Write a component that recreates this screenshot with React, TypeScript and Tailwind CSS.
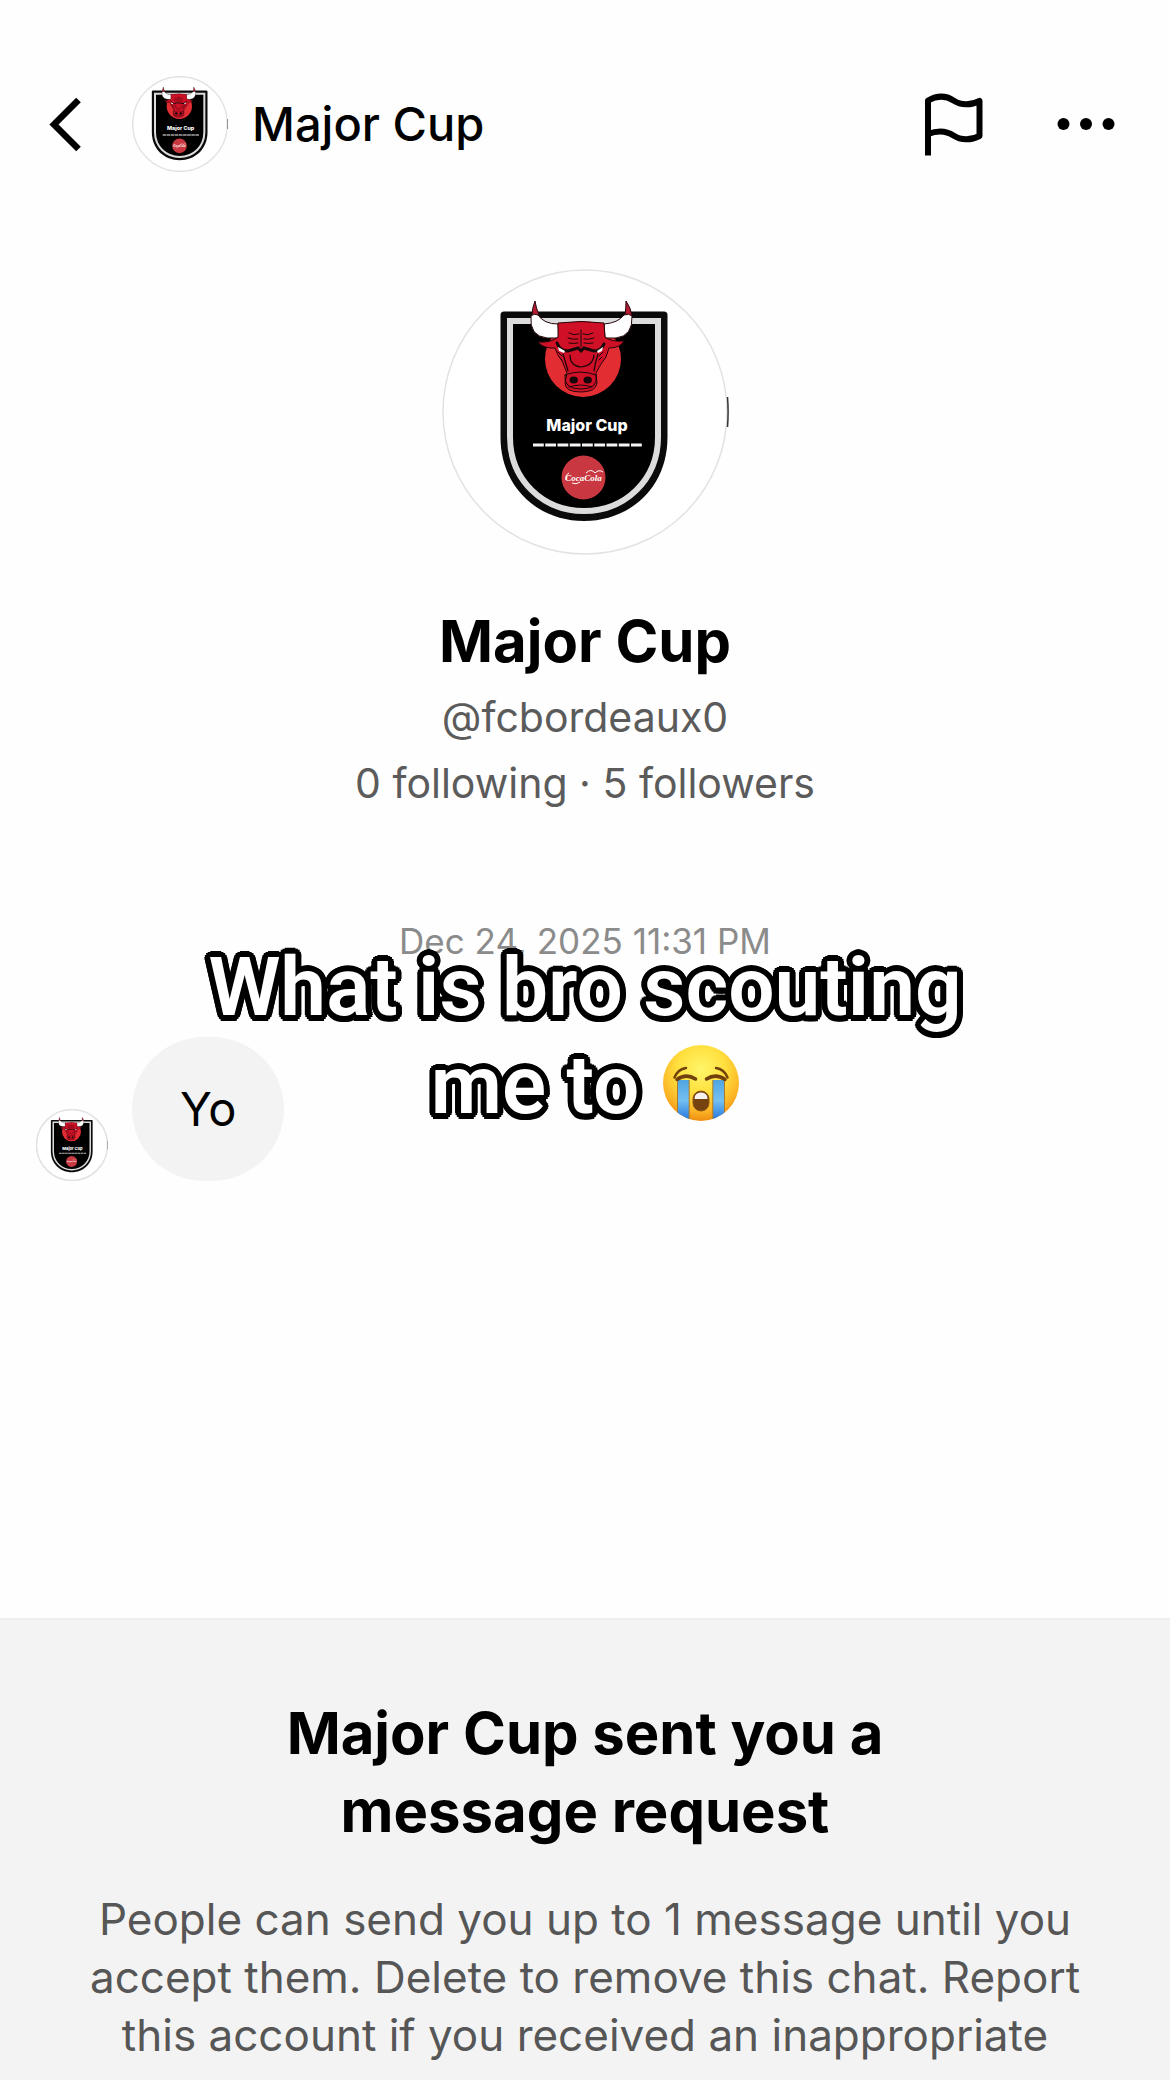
import type { ReactNode } from "react";

type Message = { id: number; text: string };

const profile = {
  name: "Major Cup",
  handle: "@fcbordeaux0",
  following: 0,
  followers: 5,
};

const messages: Message[] = [{ id: 1, text: "Yo" }];

export default function App() {
  return (
    <main className="flex min-h-screen flex-col overflow-hidden bg-[#fefefe] font-['Inter',sans-serif] text-black">
      {/* Header */}
      <header className="flex items-center pt-[76px] pr-[54px] pl-[48px]">
        <IconButton label="Back">
          <BackIcon />
        </IconButton>
        <div className="ml-[50px] size-24 shrink-0">
          <Crest />
        </div>
        <h1 className="ml-6 flex-1 text-[47px] leading-[58px] font-medium">
          {profile.name}
        </h1>
        <IconButton label="Report">
          <FlagIcon />
        </IconButton>
        <div className="w-[72px]" />
        <IconButton label="More options">
          <DotsIcon />
        </IconButton>
      </header>

      {/* Profile */}
      <section className="flex flex-col items-center pt-24 text-center">
        <div className="size-72">
          <Crest />
        </div>
        <h2 className="mt-[46px] text-[58px] leading-[78px] font-bold">
          {profile.name}
        </h2>
        <p className="mt-1 text-[41px] leading-[66px] text-[#5b5b5b]">
          {profile.handle}
        </p>
        <p className="text-[41px] leading-[66px] text-[#5b5b5b]">
          {profile.following} following · {profile.followers} followers
        </p>
      </section>

      {/* Chat */}
      <section className="relative flex-1 pt-[101px]">
        <time
          dateTime="2025-12-24T23:31"
          className="block text-center text-[35px] leading-[48px] text-[#8b8b8b]"
        >
          Dec 24, 2025 11:31 PM
        </time>
        <ul className="mt-[72px] px-9">
          {messages.map((m) => (
            <li key={m.id} className="flex items-end gap-6">
              <div className="size-[72px] shrink-0">
                <Crest />
              </div>
              <p className="rounded-[72px] bg-[#f3f3f3] px-12 py-[43px] text-[47px] leading-[58px]">
                {m.text}
              </p>
            </li>
          ))}
        </ul>
        <Caption />
      </section>

      {/* Message request */}
      <section className="border-t-2 border-[#efefef] bg-[#f3f3f3] px-[60px] pt-[74px] text-center">
        <h2 className="mx-auto max-w-[720px] text-[58px] leading-[78px] font-bold">
          {profile.name} sent you a message request
        </h2>
        <p className="mt-10 text-[44px] leading-[58px] text-[#565656]">
          People can send you up to 1 message until you
          <br />
          accept them. Delete to remove this chat. Report
          <br />
          this account if you received an inappropriate
        </p>
        <div className="h-4" />
      </section>
    </main>
  );
}

function IconButton({
  label,
  children,
}: {
  label: string;
  children: ReactNode;
}) {
  return (
    <button type="button" aria-label={label} className="shrink-0">
      {children}
    </button>
  );
}

function BackIcon() {
  return (
    <svg className="h-14 w-[34px]" viewBox="0 0 34 56" fill="none">
      <path d="M30.500 4 6 28.500 30.500 53" stroke="#000" strokeWidth="6.500" />
    </svg>
  );
}

function FlagIcon() {
  return (
    <svg className="h-16 w-[60px]" viewBox="0 0 60 64" fill="none">
      <path
        d="M4 63.500V8.500C13 3.500 22 3.500 29.500 8.500 37 13.500 47 13.500 55.500 9v35C47 48.500 37 48.500 29.500 43.500 22 38.500 13 38.500 4 42"
        stroke="#000"
        strokeWidth="6"
        strokeLinejoin="round"
      />
    </svg>
  );
}

function DotsIcon() {
  return (
    <svg className="h-16 w-[60px]" viewBox="0 0 60 64">
      <circle cx="7.500" cy="32" r="6" />
      <circle cx="30" cy="32" r="6" />
      <circle cx="52.500" cy="32" r="6" />
    </svg>
  );
}

// White caption with a round black outline, laid over the chat
function Caption() {
  return (
    <div className="pointer-events-none absolute inset-x-0 top-[122px] text-center font-['Roboto',sans-serif] text-[82px] leading-[98px] font-semibold text-white [text-shadow:6px_0_#000,5.500px_2.300px_#000,4.200px_4.200px_#000,2.300px_5.500px_#000,0_6px_#000,-2.300px_5.500px_#000,-4.200px_4.200px_#000,-5.500px_2.300px_#000,-6px_0_#000,-5.500px_-2.300px_#000,-4.200px_-4.200px_#000,-2.300px_-5.500px_#000,0_-6px_#000,2.300px_-5.500px_#000,4.200px_-4.200px_#000,5.500px_-2.300px_#000]">
      <p>What is bro scouting</p>
      <p className="flex items-center justify-center gap-6">
        me to
        <CryingFace />
      </p>
    </div>
  );
}

function CryingFace() {
  return (
    <svg
      className="mb-1 size-[76px]"
      viewBox="0 0 76 76"
      role="img"
      aria-label="Loudly crying face"
    >
      <defs>
        <radialGradient id="face" cx="0.5" cy="0.32" r="0.7">
          <stop offset="0" stopColor="#fff56a" />
          <stop offset="0.45" stopColor="#ffe03e" />
          <stop offset="0.8" stopColor="#fbb325" />
          <stop offset="1" stopColor="#ec8710" />
        </radialGradient>
        <linearGradient id="tear" x1="0" y1="0" x2="0" y2="1">
          <stop offset="0" stopColor="#4fa5e0" />
          <stop offset="0.5" stopColor="#74bff2" />
          <stop offset="1" stopColor="#1f74dc" />
        </linearGradient>
        <clipPath id="faceClip">
          <circle cx="38" cy="38" r="38" />
        </clipPath>
      </defs>
      <circle cx="38" cy="38" r="38" fill="url(#face)" />
      <g clipPath="url(#faceClip)">
        <path d="M15 35h11v41H15zM50 35h11v41H50z" fill="url(#tear)" />
        <path
          d="M14.500 35v36M26.200 35v41M49.800 35v41M61.500 35v36"
          stroke="#a87a2c"
          strokeWidth="1"
        />
      </g>
      <g fill="none" stroke="#72400c" strokeLinecap="round">
        <path d="M11.500 32.500Q15 24 23 23M64.500 32.500Q61 24 53 23" strokeWidth="2.500" />
        <path d="M14 34.500Q23 28 32.500 34M43.500 34Q53 28 62 34.500" strokeWidth="3.500" />
      </g>
      <rect x="30" y="46" width="16" height="20" rx="8" fill="#76420f" stroke="#8f5614" />
      <path d="M31.500 54q0-6.500 6.500-6.500t6.500 6.500z" fill="#f6f2ee" />
    </svg>
  );
}

function Crest() {
  return (
    <svg
      className="block size-full"
      viewBox="0 0 288 288"
      role="img"
      aria-label="Major Cup crest"
    >
      <circle
        cx="144"
        cy="144"
        r="142"
        fill="#fff"
        stroke="#e2e2e2"
        strokeWidth="1.500"
        vectorEffect="non-scaling-stroke"
      />
      <path d="M286.500 129q1.200 15 0 30" fill="none" stroke="#333" strokeWidth="1.500" />

      {/* Shield */}
      <path
        d="M63 43.500h160q3.500 0 3.500 3.500v122c0 51-38 84-83.500 84s-83.500-33-83.500-84V47q0-3.500 3.500-3.500z"
        fill="#0a0a0a"
      />
      <path
        d="M69 53h148v116c0 43-33 74-74 74s-74-31-74-74z"
        fill="#000"
        stroke="#dcdcdc"
        strokeWidth="6"
      />

      {/* Bull */}
      <circle cx="142" cy="91" r="38" fill="#e22d33" />
      <g stroke="#26060a" strokeWidth="1" strokeLinejoin="round">
        <path d="M91 48q0-8 3-15 1 7 4 14zM184 47q1-7 1-14 5 7 6 15z" fill="#b51c33" />
        <path
          d="M117 56q-14 0-20-9-4-2-7 1-2 20 16 22h12zM163 56q14-1 20-9 5-2 8 1 1 20-16 22h-11z"
          fill="#fff"
        />
        <path
          d="M117 55q23-3 46 0l1 14q6 5 19 4-4 7-15 7-2 10-8 16l-5 9 1 10q-1 9-16 9-16 0-16-9l2-10-5-12q-5-6-7-13-11 1-17-6 13 1 20-5z"
          fill="#cf1026"
        />
      </g>
      <g fill="none" stroke="#16070a" strokeLinecap="round">
        <path d="M128 65q5 3 10 1M127 70q6 2 10 1M128 75q5 1 9 0M140 62v17M152 65q-5 3-10 1M153 70q-6 2-10 1M152 75q-5 1-9 0" strokeWidth="1" />
        <path d="M116 75q3 8 11 8l10-3 3 3 3-3 10 3q7 0 10-7" strokeWidth="3" />
        <path d="M122 86q3 10 5 17M157 86q-3 9-4 17M129 87q0 11 11 12 12-1 13-12" strokeWidth="1.200" />
        <path d="M124 107q15-6 31 0M128 119q12-4 23 0M124 107q-2 14 16 14t15-14" strokeWidth="1" />
        <path d="m117 84 4 4M162 84l-4 4M118 89l3 3M161 89l-3 3" strokeWidth="1" />
      </g>
      <path d="M117 79l7 4-1 2-5-2zM162 79l-6 4 1 2 4-2z" fill="#fff" />
      <ellipse cx="132.700" cy="112" rx="4.200" ry="3.500" fill="#16070a" />
      <ellipse cx="146.700" cy="112" rx="4.200" ry="3.500" fill="#16070a" />

      <text
        x="146"
        y="163"
        textAnchor="middle"
        fill="#fff"
        className="font-['Inter',sans-serif] text-[16px] font-extrabold"
      >
        Major Cup
      </text>
      <path
        d="M92 177h109"
        stroke="#f4f4f4"
        strokeWidth="3"
        strokeDasharray="10.800 1.450"
      />

      {/* Sponsor */}
      <circle cx="142.500" cy="209.500" r="22" fill="#c93840" />
      <text
        x="142.500"
        y="213"
        textAnchor="middle"
        fill="#fff"
        className="font-['Liberation_Serif',serif] text-[9px] font-bold italic"
      >
        CocaCola
      </text>
      <path
        d="M128 205q-4 2-3 7M145 205q5-5 9 0 4-4 8-1M131 215q4 2 8-1"
        fill="none"
        stroke="#fff"
        strokeWidth="1"
      />
    </svg>
  );
}
